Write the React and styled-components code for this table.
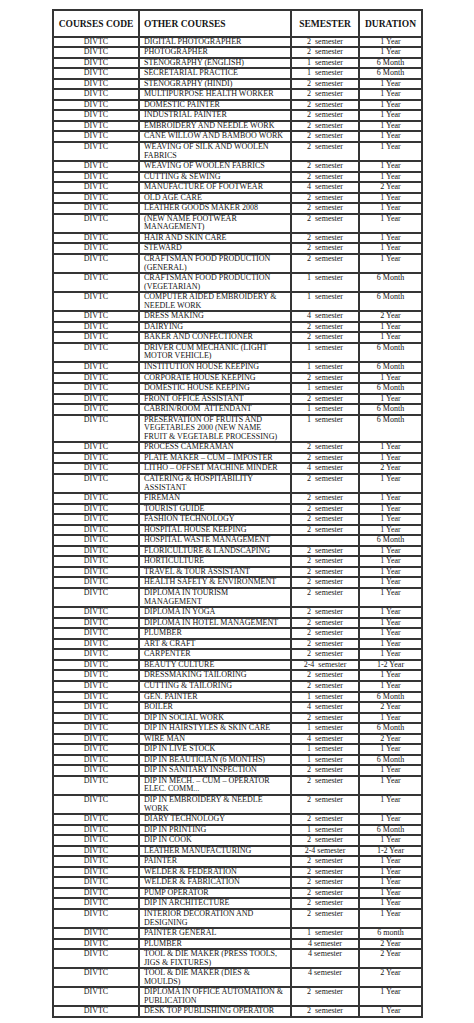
import React from "react";
import styled, { createGlobalStyle } from "styled-components";

const GlobalStyle = createGlobalStyle`
  html, body {
    margin: 0;
    padding: 0;
    background: #ffffff;
  }
`;

const Page = styled.div`
  padding: 9px 0 8px 52px;
  font-family: "Liberation Serif", "Times New Roman", serif;
  color: #141414;
`;

const Table = styled.table`
  width: 371px;
  table-layout: fixed;
  border-collapse: separate;
  border-spacing: 0;
  border: 1px solid #353535;
`;

const HeadCell = styled.th`
  border: 1px solid #353535;
  font-size: 9.5px;
  font-weight: bold;
  line-height: 11px;
  padding: 8px 0 5.5px ${(p) => (p.$align === "left" ? "4px" : "0")};
  text-align: ${(p) => p.$align || "center"};
  white-space: nowrap;
  vertical-align: middle;
`;

const Cell = styled.td`
  border: 1px solid #353535;
  font-size: 8px;
  line-height: 8.55px;
  padding: 0 ${(p) => (p.$align === "left" ? "2px 0 4px" : "0")};
  text-align: ${(p) => p.$align || "center"};
  vertical-align: top;
  white-space: pre;
  overflow: hidden;
`;

const S2 = "2  semester";
const S1 = "1  semester";
const S4 = "4  semester";
const S4b = "4 semester";
const S24 = "2-4 semester";
const Y1 = "1 Year";
const Y2 = "2 Year";
const M6 = "6 Month";
const Y12 = "1-2 Year";

const rows = [
  [["DIGITAL PHOTOGRAPHER"], S2, Y1],
  [["PHOTOGRAPHER"], S2, Y1],
  [["STENOGRAPHY (ENGLISH)"], S1, M6],
  [["SECRETARIAL PRACTICE"], S1, M6],
  [["STENOGRAPHY (HINDI)"], S2, Y1],
  [["MULTIPURPOSE HEALTH WORKER"], S2, Y1],
  [["DOMESTIC PAINTER"], S2, Y1],
  [["INDUSTRIAL PAINTER"], S2, Y1],
  [["EMBROIDERY AND NEEDLE WORK"], S2, Y1],
  [["CANE WILLOW AND BAMBOO WORK"], S2, Y1],
  [["WEAVING OF SILK AND WOOLEN", "FABRICS"], S2, Y1],
  [["WEAVING OF WOOLEN FABRICS"], S2, Y1],
  [["CUTTING & SEWING"], S2, Y1],
  [["MANUFACTURE OF FOOTWEAR"], S4, Y2],
  [["OLD AGE CARE"], S2, Y1],
  [["LEATHER GOODS MAKER 2008"], S2, Y1],
  [["(NEW NAME FOOTWEAR", "MANAGEMENT)"], S2, Y1],
  [["HAIR AND SKIN CARE"], S2, Y1],
  [["STEWARD"], S2, Y1],
  [["CRAFTSMAN FOOD PRODUCTION", "(GENERAL)"], S2, Y1],
  [["CRAFTSMAN FOOD PRODUCTION", "(VEGETARIAN)"], S1, M6],
  [["COMPUTER AIDED EMBROIDERY &", "NEEDLE WORK"], S1, M6],
  [["DRESS MAKING"], S4, Y2],
  [["DAIRYING"], S2, Y1],
  [["BAKER AND CONFECTIONER"], S2, Y1],
  [["DRIVER CUM MECHANIC (LIGHT", "MOTOR VEHICLE)"], S1, M6],
  [["INSTITUTION HOUSE KEEPING"], S1, M6],
  [["CORPORATE HOUSE KEEPING"], S2, Y1],
  [["DOMESTIC HOUSE KEEPING"], S1, M6],
  [["FRONT OFFICE ASSISTANT"], S2, Y1],
  [["CABRIN/ROOM  ATTENDANT"], S1, M6],
  [
    [
      "PRESERVATION OF FRUITS AND",
      "VEGETABLES 2000 (NEW NAME",
      "FRUIT & VEGETABLE PROCESSING)",
    ],
    S1,
    M6,
  ],
  [["PROCESS CAMERAMAN"], S2, Y1],
  [["PLATE MAKER – CUM – IMPOSTER"], S2, Y1],
  [["LITHO – OFFSET MACHINE MINDER"], S4, Y2],
  [["CATERING & HOSPITABILITY", "ASSISTANT"], S2, Y1],
  [["FIREMAN"], S2, Y1],
  [["TOURIST GUIDE"], S2, Y1],
  [["FASHION TECHNOLOGY"], S2, Y1],
  [["HOSPITAL HOUSE KEEPING"], S2, Y1],
  [["HOSPITAL WASTE MANAGEMENT"], "", M6],
  [["FLORICULTURE & LANDSCAPING"], S2, Y1],
  [["HORTICULTURE"], S2, Y1],
  [["TRAVEL & TOUR ASSISTANT"], S2, Y1],
  [["HEALTH SAFETY & ENVIRONMENT"], S2, Y1],
  [["DIPLOMA IN TOURISM", "MANAGEMENT"], S2, Y1],
  [["DIPLOMA IN YOGA"], S2, Y1],
  [["DIPLOMA IN HOTEL MANAGEMENT"], S2, Y1],
  [["PLUMBER"], S2, Y1],
  [["ART & CRAFT"], S2, Y1],
  [["CARPENTER"], S2, Y1],
  [["BEAUTY CULTURE"], "2-4  semester", Y12],
  [["DRESSMAKING TAILORING"], S2, Y1],
  [["CUTTING & TAILORING"], S2, Y1],
  [["GEN. PAINTER"], S1, M6],
  [["BOILER"], S4, Y2],
  [["DIP IN SOCIAL WORK"], S2, Y1],
  [["DIP IN HAIRSTYLES & SKIN CARE"], S1, M6],
  [["WIRE MAN"], S4, Y2],
  [["DIP IN LIVE STOCK"], S1, Y1],
  [["DIP IN BEAUTICIAN (6 MONTHS)"], S1, M6],
  [["DIP IN SANITARY INSPECTION"], S2, Y1],
  [["DIP IN MECH. – CUM – OPERATOR", "ELEC. COMM..."], S2, Y1],
  [["DIP IN EMBROIDERY & NEEDLE", "WORK"], S2, Y1],
  [["DIARY TECHNOLOGY"], S2, Y1],
  [["DIP IN PRINTING"], S1, M6],
  [["DIP IN COOK"], S2, Y1],
  [["LEATHER MANUFACTURING"], S24, Y12],
  [["PAINTER"], S2, Y1],
  [["WELDER & FEDERATION"], S2, Y1],
  [["WELDER & FABRICATION"], S2, Y1],
  [["PUMP OPERATOR"], S2, Y1],
  [["DIP IN ARCHITECTURE"], S2, Y1],
  [["INTERIOR DECORATION AND", "DESIGNING"], S2, Y1],
  [["PAINTER GENERAL"], S1, "6 month"],
  [["PLUMBER"], S4b, Y2],
  [["TOOL & DIE MAKER (PRESS TOOLS,", "JIGS & FIXTURES)"], S4b, Y2],
  [["TOOL & DIE MAKER (DIES &", "MOULDS)"], S4b, Y2],
  [["DIPLOMA IN OFFICE AUTOMATION &", "PUBLICATION"], S2, Y1],
  [["DESK TOP PUBLISHING OPERATOR"], S2, Y1],
];

const App = () => (
  <Page>
    <GlobalStyle />
    <Table>
      <colgroup>
        <col style={{ width: 86 }} />
        <col style={{ width: 152 }} />
        <col style={{ width: 68 }} />
        <col style={{ width: 63 }} />
      </colgroup>
      <thead>
        <tr>
          <HeadCell>COURSES CODE</HeadCell>
          <HeadCell $align="left">OTHER COURSES</HeadCell>
          <HeadCell>SEMESTER</HeadCell>
          <HeadCell>DURATION</HeadCell>
        </tr>
      </thead>
      <tbody>
        {rows.map(([name, sem, dur], i) => (
          <tr key={i}>
            <Cell>DIVTC</Cell>
            <Cell $align="left">{name.join("\n")}</Cell>
            <Cell>{sem}</Cell>
            <Cell>{dur}</Cell>
          </tr>
        ))}
      </tbody>
    </Table>
  </Page>
);

export default App;
